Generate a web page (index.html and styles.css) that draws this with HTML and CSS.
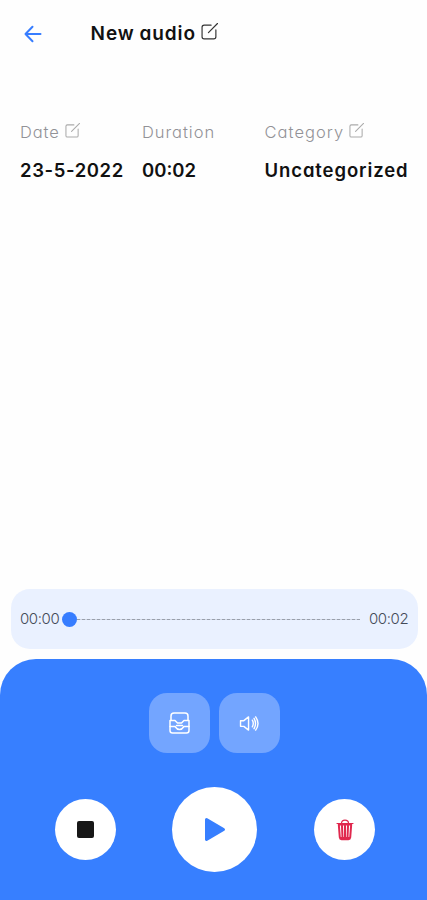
FILE: index.html
```html
<!DOCTYPE html>
<html lang="en">

<head>
    <meta charset="UTF-8">
    <meta name="viewport" content="width=device-width, initial-scale=1.0">
    <title>New audio</title>
    <link rel="stylesheet" href="styles.css">
</head>

<body>
    <div class="main">
        <div class="header">
            <svg class="back" viewBox="0 0 18 18">
                <path d="M16.5 9H1.5M8.5 1.8L1.5 9l7 7.2" />
            </svg>
            <h1 class="title">New audio</h1>
            <svg class="edit edit-title" viewBox="0 0 16 16">
                <path d="M9.5 2H3Q1 2 1 4V13Q1 15 3 15H12Q14 15 14 13V6.500M7 9L15.500 .5" />
            </svg>
        </div>

        <div class="info">
            <div class="info-item">
                <div class="label">
                    <span class="label-date">Date</span>
                    <svg class="edit" viewBox="0 0 16 16">
                        <path d="M9.500 2H2.500Q1 2 1 3.500V13.500Q1 15 2.500 15H12.500Q14 15 14 13.500V6.500M7 9L15.500 .5" />
                    </svg>
                </div>
                <div class="value value-date">23-5-2022</div>
            </div>
            <div class="info-item">
                <div class="label"><span class="label-duration">Duration</span></div>
                <div class="value">00:02</div>
            </div>
            <div class="info-item">
                <div class="label">
                    <span class="label-category">Category</span>
                    <svg class="edit" viewBox="0 0 16 16">
                        <path d="M9.500 2H2.500Q1 2 1 3.500V13.500Q1 15 2.500 15H12.500Q14 15 14 13.500V6.500M7 9L15.500 .5" />
                    </svg>
                </div>
                <div class="value value-category">Uncategorized</div>
            </div>
        </div>

        <div class="player">
            <span class="time">00:00</span>
            <span class="thumb"></span>
            <span class="track"></span>
            <span class="time">00:02</span>
        </div>

        <div class="panel">
            <div class="tools">
                <div class="tool center">
                    <svg class="icon-tray" viewBox="0 0 21 22">
                        <path d="M2 8V4Q2 1 5 1H16Q19 1 19 4V8" />
                        <path d="M1 8.500V18.500Q1 21 3.500 21H17.500Q20 21 20 18.500V8.500M1 8.500H6L8.500 11H12.500L15 8.500H20" />
                        <path d="M1 14.500H6Q8 17.500 10.500 17.500T15 14.500H20M7.500 13.500H13.500" />
                    </svg>
                </div>
                <div class="tool center">
                    <svg class="icon-sound" viewBox="0 0 22 18">
                        <path d="M1.500 6H5L10 2V16L5 12H1.500Z" />
                        <path d="M14 5.500Q16 9 14 12.500M15.800 3.500Q19 9 15.800 14.500M17.500 2Q22.500 9 17.500 16" />
                    </svg>
                </div>
            </div>
            <div class="controls">
                <div class="btn center"><span class="stop"></span></div>
                <div class="btn btn-play center">
                    <svg class="icon-play" viewBox="0 0 24 26">
                        <path d="M3.500 2.500L20.500 12.500L3.500 22.500Z" />
                    </svg>
                </div>
                <div class="btn center">
                    <svg class="icon-trash" viewBox="0 0 18 22">
                        <path class="lid" d="M1 4.500H17M5.500 4.300Q5.500 1.200 9 1.200T12.500 4.300" />
                        <path d="M2.800 5.500L3.800 18.500Q4 20.200 5.500 20.200H12.500Q14 20.200 14.200 18.500L15.200 5.500ZM6 7L6.500 18.500M9 7V18.500M12 7L11.500 18.500M5 19H13" />
                    </svg>
                </div>
            </div>
        </div>
    </div>
</body>

</html>
```

FILE: styles.css
```css
body {
    margin: 0;
    background: #fefefe;
    font-family: Inter, "Liberation Sans", sans-serif;
    font-feature-settings: "cv11";
    color: #111;
}

svg {
    display: block;
    flex: none;
    fill: none;
    stroke-linecap: round;
    stroke-linejoin: round;
}

.main {
    display: flex;
    flex-direction: column;
    height: 900px;
    overflow: hidden;
}

.center {
    display: flex;
    align-items: center;
    justify-content: center;
}

.header {
    display: flex;
    align-items: center;
    height: 68px;
    padding-left: 24px;
}

.back {
    width: 18px;
    height: 18px;
    stroke: #377dff;
    stroke-width: 2;
}

.title {
    width: 107px;
    margin: 0 4px 0 48.5px;
    font-size: 19px;
    font-weight: 600;
    line-height: 28px;
    letter-spacing: 0.95px;
    word-spacing: -1px;
    white-space: nowrap;
}

.edit {
    width: 15px;
    height: 15px;
    margin: -3px 0 0 5px;
    stroke: #aaa;
    stroke-width: 1.1;
}

.edit-title {
    width: 17px;
    height: 17px;
    margin: -5px 0 0 -1px;
    stroke: #333;
}

.info {
    display: grid;
    grid-template-columns: 122px 122.5px 1fr;
    padding: 51px 0 0 20px;
}

.label {
    display: flex;
    align-items: center;
    height: 25px;
    font-size: 16.5px;
    font-weight: 300;
    color: #929297;
}

.label-date {
    letter-spacing: 0.9px;
}

.label-duration {
    letter-spacing: 0.95px;
}

.label-category {
    letter-spacing: 1.05px;
}

.value {
    margin-top: 13px;
    font-size: 18.5px;
    font-weight: 600;
    line-height: 26px;
    white-space: nowrap;
}

.value-date {
    letter-spacing: 0.6px;
}

.value-category {
    letter-spacing: 0.9px;
}

.player {
    display: flex;
    align-items: center;
    box-sizing: border-box;
    height: 60px;
    margin: auto 9px 10px 10.5px;
    padding: 0 9px 0 9.5px;
    border-radius: 19px;
    background: #eaf1ff;
}

.time {
    width: 40px;
    margin-top: -1px;
    font-size: 15px;
    font-weight: 300;
    color: #444b58;
    letter-spacing: -0.4px;
}

.thumb {
    width: 15px;
    height: 15px;
    margin-left: 2px;
    border-radius: 50%;
    background: #377dff;
}

.track {
    flex: 1;
    height: 1px;
    margin: 1px 9px 0 0;
    background: repeating-linear-gradient(90deg, #999fab 0 3px, #cfd6e4 3px 5px);
}

.panel {
    box-sizing: border-box;
    height: 241px;
    padding-top: 34px;
    border-radius: 36px 36px 0 0;
    background: #377fff;
}

.tools {
    display: flex;
    justify-content: center;
    gap: 9px;
    padding-left: 2px;
}

.tool {
    width: 61px;
    height: 60px;
    border-radius: 18px;
    background: #73a5ff;
}

.icon-tray {
    width: 21px;
    height: 22px;
    stroke: #fff;
    stroke-width: 1.5;
}

.icon-sound {
    width: 21px;
    height: 17px;
    stroke: #fff;
    stroke-width: 1.5;
}

.controls {
    display: flex;
    align-items: center;
    justify-content: space-between;
    margin-top: 34px;
    padding: 0 52px 0 54.5px;
}

.btn {
    width: 61px;
    height: 61px;
    border-radius: 50%;
    background: #fff;
}

.btn-play {
    width: 85px;
    height: 85px;
}

.stop {
    width: 17px;
    height: 17px;
    border-radius: 2px;
    background: #171717;
}

.icon-play {
    width: 24px;
    height: 26px;
    fill: #377fff;
    stroke: #377fff;
    stroke-width: 3;
}

.icon-trash {
    width: 18px;
    height: 22px;
    stroke: #e0284e;
    stroke-width: 2;
}

.icon-trash .lid {
    stroke-width: 1.2;
}
```
